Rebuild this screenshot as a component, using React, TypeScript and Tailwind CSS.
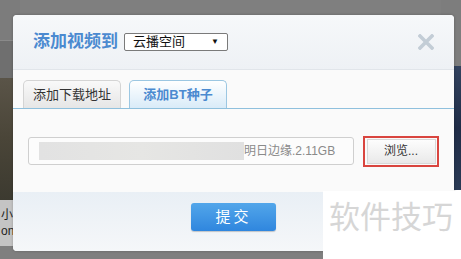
import React from 'react';

const FONT = '"Liberation Sans", "Noto Sans CJK SC", sans-serif';

function Backdrop() {
    return (
        <div className="flex h-full w-full justify-between">
            {/* left strip of the page behind the overlay */}
            <div className="flex w-[20px] flex-col">
                <div className="h-[40px] bg-[#7c7c7c]" />
                <div className="h-[1px] bg-[#8a8a8a]" />
                <div className="h-[37px] bg-[#6f6f6f]" />
                <div className="h-[122px] bg-gradient-to-b from-[#5a5448] via-[#4a4538] to-[#3c3a30]" />
                <div className="flex h-[46px] flex-col justify-center bg-[#c4c4c4] pl-[1px] text-[12px] leading-[16px] text-[#222]">
                    <span>小i</span>
                    <span>on</span>
                </div>
                <div className="flex-1 bg-[#7f7f7f]" />
            </div>
            {/* right strip */}
            <div className="flex w-[20px] flex-col">
                <div className="h-[66px] bg-[#7d7d7d]" />
                <div className="h-[124px] bg-gradient-to-b from-[#33435f] via-[#1f2c47] to-[#2a3a55]" />
                <div className="flex-1 bg-white" />
            </div>
        </div>
    );
}

function Dialog() {
    return (
        <div className="flex h-[236px] w-[441px] flex-col overflow-hidden rounded-[4px] bg-[#fafafa] shadow-[0_0_3px_rgba(0,0,0,0.25)]">
            {/* header */}
            <div className="flex h-[55px] items-center border-b border-[#e1e5ea] bg-gradient-to-b from-[#f6f8fa] to-[#eef1f5] pl-[20px] pr-[20px]">
                <span className="text-[17px] font-bold text-[#4b8ad0]">添加视频到</span>
                <div className="ml-[6px] flex h-[18px] w-[104px] items-center justify-between rounded-[2px] border border-[#7a7a7a] bg-white pl-[8px] pr-[8px] text-[13px] text-[#111]">
                    <span>云播空间</span>
                    <span className="text-[8px]">▼</span>
                </div>
                <div className="flex-1" />
                <svg width="16" height="16" viewBox="0 0 16 16">
                    <path d="M2 2 L14 14 M14 2 L2 14" stroke="#c3cdd6" strokeWidth="3.6" strokeLinecap="square" />
                </svg>
            </div>

            {/* tabs */}
            <div className="flex h-[39px] items-end gap-[8px] border-b border-[#8fc0dd] pl-[10px]">
                <div className="flex h-[28px] w-[98px] items-center justify-center rounded-t-[5px] border border-b-0 border-[#d4d4d4] bg-gradient-to-b from-[#f9f9f9] to-[#e6e6e6] text-[13px] text-[#333]">
                    添加下载地址
                </div>
                <div className="flex h-[28px] w-[98px] items-center justify-center rounded-t-[5px] border border-b-0 border-[#9cc7e2] bg-gradient-to-b from-[#ffffff] to-[#d9ebf8] text-[13px] font-bold text-[#4b8ad0]">
                    添加BT种子
                </div>
            </div>

            {/* content */}
            <div className="flex h-[83px] items-center bg-[#fafafa] pl-[15px] pt-[1px]">
                <div className="flex h-[28px] w-[326px] items-center rounded-[3px] border border-[#cfcfcf] bg-[#fcfcfc] pl-[10px]">
                    <div className="h-[18px] w-[205px] shrink-0 bg-gradient-to-r from-[#e2e2e2] via-[#e6e6e4] to-[#e0e0e0]" />
                    <span className="whitespace-nowrap text-[12px] text-[#8a8a8a]">明日边缘.2.11GB</span>
                </div>
                <div className="ml-[9px] flex h-[31px] w-[76px] items-center justify-center border-[2px] border-[#d9453f]">
                    <div className="flex h-[25px] w-[69px] items-center justify-center border border-[#d8d8d8] bg-gradient-to-b from-[#fdfdfd] to-[#e9e9e9] text-[12px] text-[#333]">
                        浏览...
                    </div>
                </div>
            </div>

            {/* footer */}
            <div className="flex flex-1 justify-center bg-gradient-to-b from-[#e9eff5] to-[#f5f7f9] pt-[11px]">
                <div className="flex h-[28px] w-[85px] items-center justify-center rounded-[3px] bg-gradient-to-b from-[#52a6ea] to-[#2f86de] text-[15px] tracking-[3px] text-white shadow-[0_1px_1px_rgba(0,0,0,0.2)]">
                    提交
                </div>
            </div>
        </div>
    );
}

export default function App() {
    return (
        <div className="relative h-[259px] w-[461px] overflow-hidden bg-[#7f7f7f]" style={{ fontFamily: FONT }}>
            <Backdrop />
            <div className="absolute left-[13px] top-[15px]">
                <Dialog />
            </div>
            {/* watermark */}
            <div className="absolute left-[323px] top-[191px] flex h-[68px] w-[138px] items-start bg-white pl-[6px] pt-[3px]">
                <span className="text-[31px] leading-[42px] text-[#d6d6d6]" style={{ fontFamily: '"Noto Sans CJK SC", sans-serif' }}>
                    软件技巧
                </span>
            </div>
        </div>
    );
}
